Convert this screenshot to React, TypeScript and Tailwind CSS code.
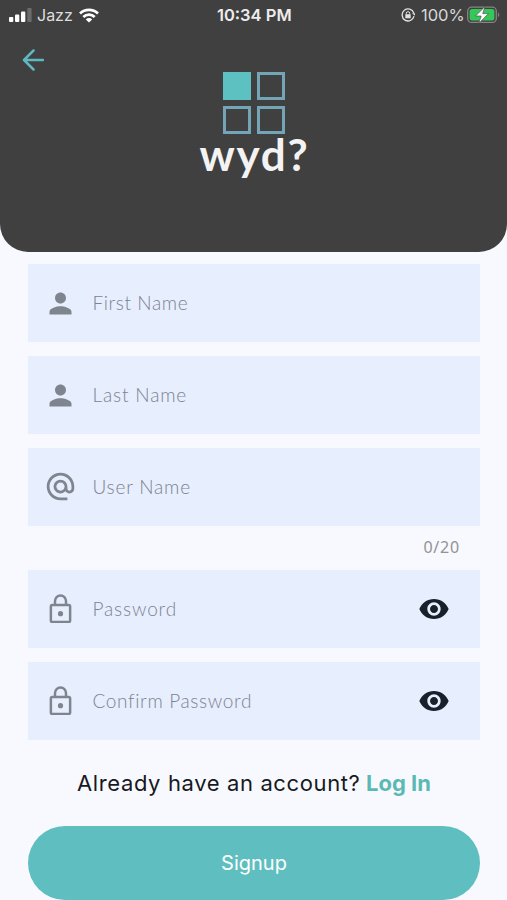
import type { ReactNode } from 'react';
import { MdAlternateEmail, MdPerson, MdVisibility } from 'react-icons/md';

function LockIcon() {
  return (
    <svg viewBox="0 0 24 24" className="w-[33px] h-[33px]" fill="none" stroke="currentColor" strokeWidth="1.8">
      <rect x="5" y="8.8" width="14" height="12.2" rx="1" />
      <path d="M8 9V5.8a4 4 0 0 1 8 0V9" />
      <circle cx="12" cy="15" r="1.9" fill="currentColor" stroke="none" />
    </svg>
  );
}

function StatusBar() {
  return (
    <div className="relative flex h-[30px] items-center justify-between pl-[9px] pr-[7px] text-[#ededed]">
      <div className="flex items-center">
        <svg viewBox="0 0 23 14" className="w-[23px] h-[14px]" fill="#fff">
          <rect x="0" y="9" width="4.3" height="5" rx="1" />
          <rect x="6" y="6.5" width="4.3" height="7.5" rx="1" />
          <rect x="12" y="3.5" width="4.3" height="10.5" rx="1" />
          <rect x="18.3" y="0" width="4.3" height="14" rx="1" fill="#6b6b6b" />
        </svg>
        <span className="ml-[5px] w-[36px] text-[16px] text-[#dedede]">Jazz</span>
        <svg viewBox="0 0 20 15" className="ml-[6px] w-[20px] h-[15px]" fill="none" stroke="#fff" strokeWidth="2.7">
          <path d="M1 5.5a13 13 0 0 1 18 0" />
          <path d="M4.3 9a8.2 8.2 0 0 1 11.4 0" />
          <path d="M10 14.6 6.8 11.4a4.6 4.6 0 0 1 6.4 0z" fill="#fff" stroke="none" />
        </svg>
      </div>
      <span className="absolute left-[217px] whitespace-nowrap text-[16.5px] font-semibold">10:34 PM</span>
      <div className="flex items-center">
        <svg viewBox="0 0 14 14" className="w-[14px] h-[14px]" fill="none" stroke="#e0e0e0" strokeWidth="1.3">
          <path d="M12.8 5A6 6 0 1 0 13 8.2" />
          <path d="M10.9 5.2h3.2v2.6z" fill="#e0e0e0" stroke="none" />
          <rect x="4.3" y="6.3" width="5.4" height="4" rx=".5" fill="#e0e0e0" stroke="none" />
          <path d="M5.3 6.5V5.3a1.7 1.7 0 0 1 3.4 0v1.2" strokeWidth="1" />
        </svg>
        <span className="ml-[6px] w-[43px] text-[16.5px] text-[#d8d8d8]">100%</span>
        <svg viewBox="0 0 33 18" className="ml-[3px] w-[33px] h-[18px]">
          <rect x=".7" y="1.2" width="28.6" height="15.2" rx="4" fill="none" stroke="#858585" strokeWidth="1.3" />
          <rect x="2.6" y="3" width="24.8" height="11.6" rx="2.5" fill="#36c75a" />
          <path d="M31 6.5c1.6.6 1.6 4 0 4.6z" fill="#858585" />
          <path d="M18 .5 8.5 10h5.7L11.7 17.5 21.5 7.6h-5.8z" fill="#fff" stroke="#404040" strokeWidth=".6" />
        </svg>
      </div>
    </div>
  );
}

function Logo() {
  return (
    <div className="flex flex-col items-center">
      <div className="grid grid-cols-2 gap-[6px]">
        <div className="h-7 w-7 bg-[#5dc1c2]" />
        <div className="h-7 w-7 border-3 border-[#73a5b7]" />
        <div className="h-7 w-7 border-3 border-[#73a5b7]" />
        <div className="h-7 w-7 border-3 border-[#73a5b7]" />
      </div>
      <div className="-mt-[4px] pl-[2px] font-['Lato'] text-[44px] font-bold leading-[48px] tracking-[1.8px] text-[#f3f3f3]">wyd?</div>
    </div>
  );
}

function Field({ icon, label, tracking, secret }: { icon: ReactNode; label: string; tracking: string; secret?: boolean }) {
  return (
    <div className="flex h-[78px] items-center bg-[#e7eefd] pl-[15.5px] pr-[30px] text-[#7f858f]">
      {icon}
      <span className={`ml-4 flex-1 font-['Lato'] text-[19px] font-light text-[#7d8391] ${tracking}`}>{label}</span>
      {secret && <MdVisibility className="h-8 w-8 text-[#18202b]" />}
    </div>
  );
}

export default function App() {
  return (
    <div className="flex h-[900px] w-[507px] flex-col overflow-hidden bg-[#f8f9fe] font-['Inter',sans-serif]">
      <header className="relative h-[252px] shrink-0 rounded-b-[28px] bg-[#404040]">
        <StatusBar />
        <svg viewBox="0 0 22 22" className="absolute left-[22px] top-[49px] h-[22px] w-[22px]" fill="none" stroke="#5db9bf" strokeWidth="2.5" strokeLinecap="round" strokeLinejoin="round">
          <path d="M11.5 1.5 2 11l9.5 9.5M2 11h19" />
        </svg>
        <div className="mt-[42px]">
          <Logo />
        </div>
      </header>

      <main className="flex flex-col pl-7 pr-[27px] pt-3">
        <div className="flex flex-col gap-[14px]">
          <Field icon={<MdPerson className="h-[33px] w-[33px]" />} label="First Name" tracking="tracking-[0.6px]" />
          <Field icon={<MdPerson className="h-[33px] w-[33px]" />} label="Last Name" tracking="tracking-[0.85px]" />
          <Field icon={<MdAlternateEmail className="-mt-[2px] h-[33px] w-[33px]" />} label="User Name" tracking="tracking-[0.8px]" />
        </div>
        <div className="flex h-[44px] items-center justify-end pb-[3px] pr-[20px] font-['Noto_Sans'] text-[16px] tracking-[0.8px] text-[#929292]">0/20</div>
        <div className="flex flex-col gap-[14px]">
          <Field icon={<LockIcon />} label="Password" tracking="tracking-[0.85px]" secret />
          <Field icon={<LockIcon />} label="Confirm Password" tracking="tracking-[0.65px]" secret />
        </div>

        <p className="mt-[27px] flex h-8 items-center whitespace-nowrap pl-[49px] text-[22px] text-[#17191d]">
          <span className="w-[289px] tracking-[0.62px]">Already have an account?</span>
          <span className="font-bold text-[#5bb9b5]">Log In</span>
        </p>
        <button className="mt-[27px] h-[74px] rounded-full bg-[#5fbfc0] text-[20px] text-white">Signup</button>
      </main>
    </div>
  );
}
